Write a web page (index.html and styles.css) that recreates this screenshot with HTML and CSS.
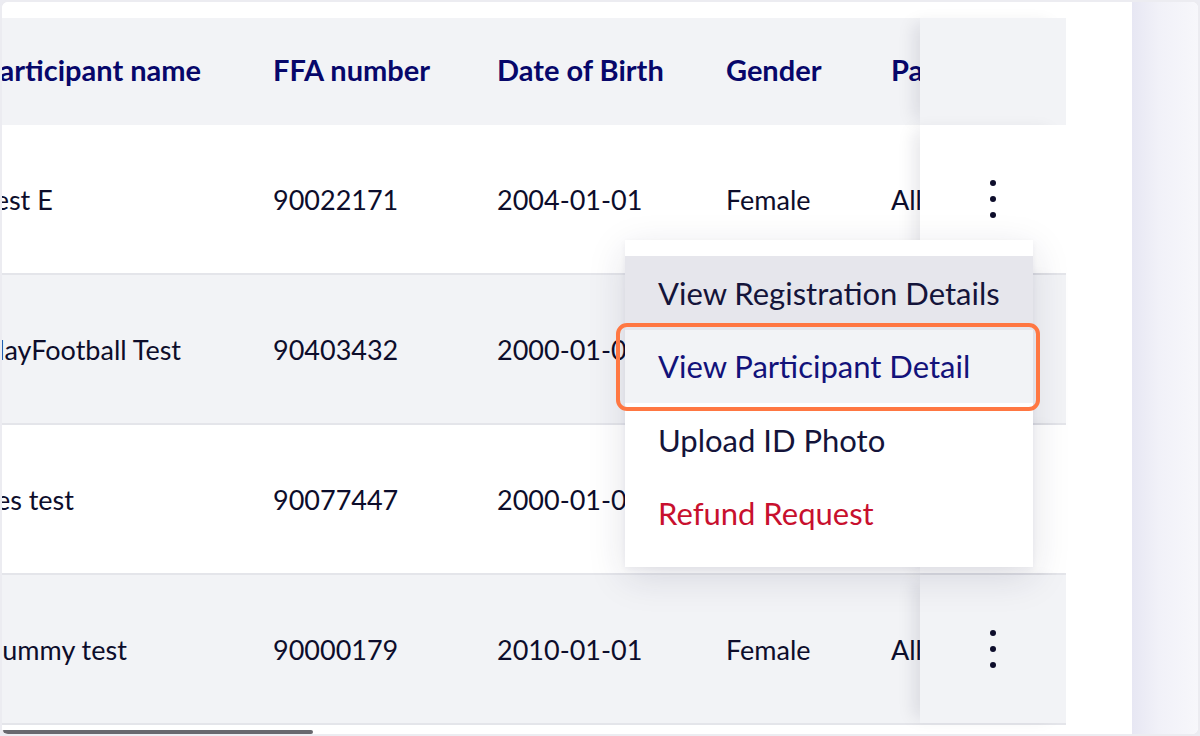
FILE: index.html
```html
<!DOCTYPE html>
<html>
<head>
<meta charset="utf-8">
<link rel="stylesheet" href="styles.css">
</head>
<body>
<div class="frame">
  <div class="card">
    <div class="table">
      <div class="row head">
        <div class="cells">
          <div class="c c-name">Participant name</div>
          <div class="c c-ffa">FFA number</div>
          <div class="c c-dob">Date of Birth</div>
          <div class="c c-gen">Gender</div>
          <div class="c c-pa">Participant type</div>
        </div>
        <div class="sticky"></div>
      </div>
      <div class="row">
        <div class="cells">
          <div class="c c-name">Test E</div>
          <div class="c c-ffa">90022171</div>
          <div class="c c-dob">2004-01-01</div>
          <div class="c c-gen">Female</div>
          <div class="c c-pa">All</div>
        </div>
        <div class="sticky">
          <svg class="kebab" width="12" height="40" viewBox="0 0 12 40"><circle cx="6" cy="4" r="3"/><circle cx="6" cy="20" r="3"/><circle cx="6" cy="36" r="3"/></svg>
        </div>
      </div>
      <div class="row alt">
        <div class="cells">
          <div class="c c-name">PlayFootball Test</div>
          <div class="c c-ffa">90403432</div>
          <div class="c c-dob">2000-01-01</div>
          <div class="c c-gen">Male</div>
          <div class="c c-pa">All</div>
        </div>
        <div class="sticky">
          <svg class="kebab" width="12" height="40" viewBox="0 0 12 40"><circle cx="6" cy="4" r="3"/><circle cx="6" cy="20" r="3"/><circle cx="6" cy="36" r="3"/></svg>
        </div>
      </div>
      <div class="row">
        <div class="cells">
          <div class="c c-name">Yes test</div>
          <div class="c c-ffa">90077447</div>
          <div class="c c-dob">2000-01-01</div>
          <div class="c c-gen">Male</div>
          <div class="c c-pa">All</div>
        </div>
        <div class="sticky">
          <svg class="kebab" width="12" height="40" viewBox="0 0 12 40"><circle cx="6" cy="4" r="3"/><circle cx="6" cy="20" r="3"/><circle cx="6" cy="36" r="3"/></svg>
        </div>
      </div>
      <div class="row alt">
        <div class="cells">
          <div class="c c-name">Dummy test</div>
          <div class="c c-ffa">90000179</div>
          <div class="c c-dob">2010-01-01</div>
          <div class="c c-gen">Female</div>
          <div class="c c-pa">All</div>
        </div>
        <div class="sticky">
          <svg class="kebab" width="12" height="40" viewBox="0 0 12 40"><circle cx="6" cy="4" r="3"/><circle cx="6" cy="20" r="3"/><circle cx="6" cy="36" r="3"/></svg>
        </div>
      </div>
    </div>
    <div class="scrollbar"></div>
  </div>
  <div class="side"></div>

  <div class="menu">
    <div class="item hover">View Registration Details</div>
    <div class="item active">View Participant Detail</div>
    <div class="item">Upload ID Photo</div>
    <div class="item danger">Refund Request</div>
  </div>
  <div class="highlight"></div>
</div>
</body>
</html>
```
FILE: styles.css
```css
html, body {
  margin: 0;
  padding: 0;
  background: #ececf2;
}
body {
  font-family: Lato, "Open Sans", sans-serif;
  color: #0d0d2b;
}
.frame {
  position: relative;
  width: 1200px;
  height: 736px;
  box-sizing: border-box;
  border: 2px solid #ececf1;
  border-radius: 8px;
  overflow: hidden;
  display: flex;
  background: #fff;
}
.card {
  width: 1130px;
  flex: 0 0 1130px;
  background: #fff;
  padding-top: 16px;
  box-sizing: border-box;
  display: flex;
  flex-direction: column;
}
.side {
  flex: 1;
  background: linear-gradient(to right, #e7e7f3 0%, #f1f1f8 40%, #f7f7fb 100%);
}
.table {
  width: 1064px;
}
.row {
  display: flex;
  height: 148px;
  border-bottom: 2px solid #e4e5ea;
  background: #fff;
}
.row.alt, .row.head {
  background: #f2f3f6;
}
.row.head {
  height: 107px;
  border-bottom: none;
  font-weight: 700;
  color: #07076a;
}
.row.head .cells {
  font-size: 29px;
  padding-bottom: 4px;
  box-sizing: border-box;
}
.cells {
  width: 918px;
  overflow: hidden;
  display: flex;
  align-items: center;
  font-size: 27px;
  white-space: nowrap;
}
.c {
  flex: 0 0 auto;
}
.c-name { width: 291px; margin-left: -20px; }
.c-ffa { width: 224px; }
.c-dob { width: 229px; }
.c-gen { width: 165px; }
.c-pa { width: 200px; }
.sticky {
  width: 146px;
  flex: 0 0 146px;
  display: flex;
  align-items: center;
  justify-content: center;
  background: inherit;
  box-shadow: -12px 0 16px -6px rgba(20, 20, 50, 0.10);
  position: relative;
}
.kebab {
  fill: #0d0d2b;
}
.scrollbar {
  margin-top: 5px;
  width: 311px;
  height: 4px;
  border-radius: 2px;
  background: #68686e;
}
.menu {
  position: absolute;
  left: 623px;
  top: 238px;
  width: 408px;
  padding: 16px 0 17px;
  background: #fff;
  box-shadow: 0 10px 36px rgba(30, 30, 70, 0.13), 0 2px 6px rgba(30, 30, 70, 0.05);
  font-size: 31px;
}
.item {
  height: 73.5px;
  display: flex;
  align-items: center;
  padding-left: 33px;
  color: #14143a;
}
.item.hover {
  background: #e6e6ec;
}
.item.active {
  background: #f2f3f6;
  color: #12127a;
}
.item.danger {
  color: #c8102e;
}
.highlight {
  position: absolute;
  left: 614px;
  top: 321px;
  width: 424px;
  height: 88px;
  box-sizing: border-box;
  border: 4px solid #ff7742;
  border-radius: 11px;
}
```
